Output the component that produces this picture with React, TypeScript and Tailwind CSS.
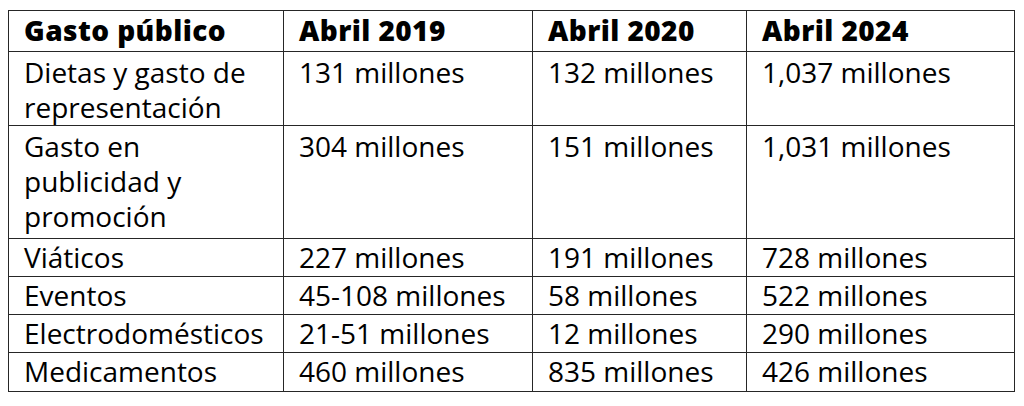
import React from 'react';

const rows: { label: string[]; values: string[]; height: string; pad: string }[] = [
  { label: ['Dietas y gasto de', 'representación'], values: ['131 millones', '132 millones', '1,037 millones'], height: 'h-[74px]', pad: 'pt-[3px]' },
  { label: ['Gasto en', 'publicidad y', 'promoción'], values: ['304 millones', '151 millones', '1,031 millones'], height: 'h-[113px]', pad: 'pt-[3px]' },
  { label: ['Viáticos'], values: ['227 millones', '191 millones', '728 millones'], height: 'h-[38px]', pad: 'pt-[1px]' },
  { label: ['Eventos'], values: ['45-108 millones', '58 millones', '522 millones'], height: 'h-[38px]', pad: 'pt-[1px]' },
  { label: ['Electrodomésticos'], values: ['21-51 millones', '12 millones', '290 millones'], height: 'h-[38px]', pad: 'pt-[1px]' },
  { label: ['Medicamentos'], values: ['460 millones', '835 millones', '426 millones'], height: 'h-[39px]', pad: 'pt-[1px]' },
];

const headers = ['Gasto público', 'Abril 2019', 'Abril 2020', 'Abril 2024'];

const App: React.FC = () => {
  return (
    <div className="w-[1024px] h-[406px] bg-white pl-[8px] pt-[10px] font-['Open_Sans',sans-serif] text-[28px] text-black">
      <table className="table-fixed border-collapse w-[1006px]">
        <colgroup>
          <col className="w-[275px]" />
          <col className="w-[249px]" />
          <col className="w-[214px]" />
          <col className="w-[268px]" />
        </colgroup>
        <thead>
          <tr className="h-[41px]">
            {headers.map((h) => (
              <th
                key={h}
                className="border border-neutral-800 pl-[15px] text-left align-top font-extrabold leading-[39px] tracking-[0.015em]"
              >
                {h}
              </th>
            ))}
          </tr>
        </thead>
        <tbody>
          {rows.map((row) => (
            <tr key={row.label[0]} className={row.height}>
              <td className={`border border-neutral-800 pl-[15px] align-top leading-[35px] whitespace-nowrap ${row.pad}`}>
                {row.label.map((line) => (
                  <div key={line}>{line}</div>
                ))}
              </td>
              {row.values.map((v, i) => (
                <td key={i} className={`border border-neutral-800 pl-[15px] align-top leading-[35px] whitespace-nowrap ${row.pad}`}>
                  {v}
                </td>
              ))}
            </tr>
          ))}
        </tbody>
      </table>
    </div>
  );
};

export default App;
